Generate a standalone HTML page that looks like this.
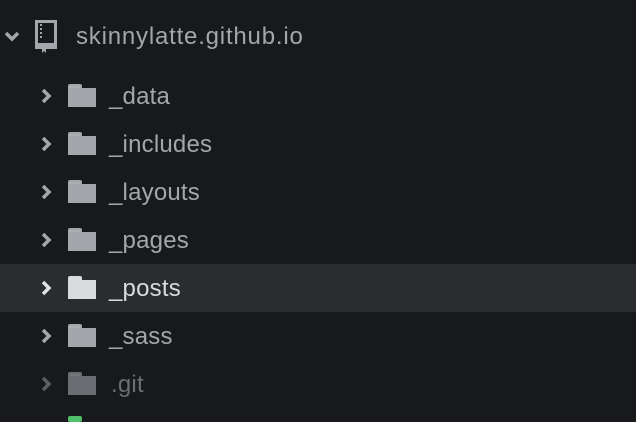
<html><head><style>
body{margin:0;width:636px;height:420px;background:#18191c;overflow:hidden;font-family:"Liberation Sans",sans-serif;position:relative}
.row{position:absolute;left:0;width:636px;height:48px}
.row.sel{background:#2a2c30}
.row svg{position:absolute}
.t{position:absolute;left:109px;top:11px;font-size:24px;line-height:28px;color:#a3a6ab;letter-spacing:0.2px}
</style></head><body>
<div class="row" style="top:12px">
<svg style="left:4px;top:18px" width="16" height="12" viewBox="0 0 16 12"><path d="M2 3l6 6 6-6" stroke="#a3a6ab" stroke-width="3.5" fill="none"/></svg>
<svg style="left:33px;top:7px" width="26" height="34" viewBox="0 0 26 34"><path d="M3.5 2.5h19v25h-19z" fill="none" stroke="#a3a6ab" stroke-width="3"/><rect x="2" y="24" width="22" height="6" fill="#a3a6ab"/><path d="M9 29v5l2-2 2 2v-5z" fill="#a3a6ab"/><path d="M8 5v16" stroke="#a3a6ab" stroke-width="2" stroke-dasharray="2 2"/></svg>
<div class="t" style="left:76px;letter-spacing:0.8px">skinnylatte.github.io</div>
</div>
<div id="rows"></div>
<script>
var names=[["_data",0],["_includes",0],["_layouts",0],["_pages",0],["_posts",1],["_sass",0],[".git",2]];
var h="";
names.forEach(function(n,i){
var top=72+i*48;var c=n[1]==1?"#d9dbdf":n[1]==2?"#6a6d72":"#a3a6ab";var cc=n[1]==1?"#e0e2e5":n[1]==2?"#5c5f63":"#a3a6ab";
h+='<div class="row'+(n[1]==1?' sel':'')+'" style="top:'+top+'px">'+
'<svg style="left:40px;top:16px" width="14" height="16" viewBox="0 0 14 16"><path d="M3 2l6 6-6 6" stroke="'+cc+'" stroke-width="3.5" fill="none"/></svg>'+
'<svg style="left:68px;top:11px" width="28" height="24" viewBox="0 0 28 24"><path d="M0 3a2 2 0 0 1 2-2h10a2 2 0 0 1 2 2v2h14v19H0z" fill="'+c+'"/><path d="M2 3h10v2H2z" fill="#fff" opacity="0.08"/></svg>'+
'<div class="t" style="color:'+c+(n[1]==2?';left:111px':'')+'">'+n[0]+'</div></div>';});
h+='<div style="position:absolute;left:68px;top:416px;width:14px;height:6px;background:#4fbf6a;border-radius:2px"></div>';
document.getElementById("rows").innerHTML=h;
</script>
</body></html>
